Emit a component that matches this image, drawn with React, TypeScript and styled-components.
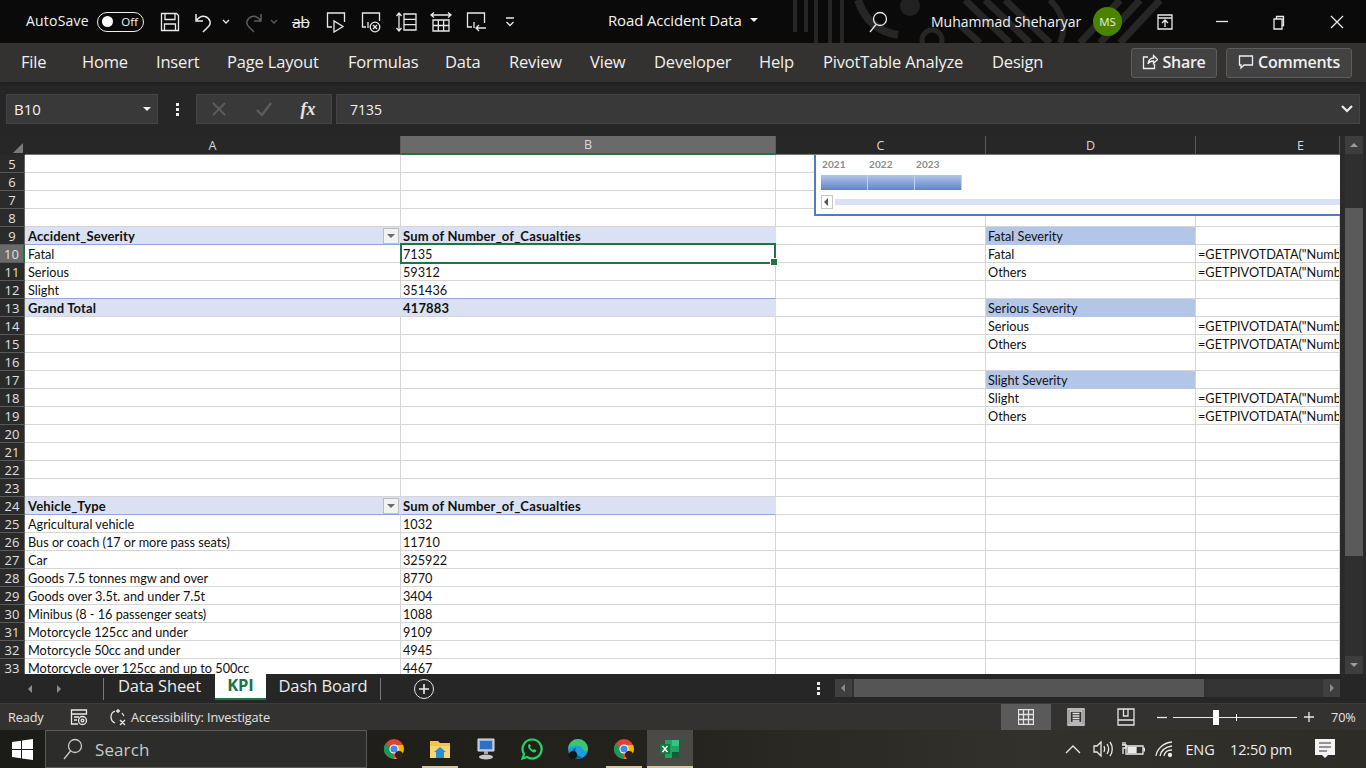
import React from "react";
import styled, { createGlobalStyle } from "styled-components";

const Global = createGlobalStyle`
  html, body { margin: 0; padding: 0; background: #262626; overflow: hidden; }
  * { box-sizing: border-box; }
  #root { width: 1366px; height: 768px; }
`;
const UI = `"Open Sans", "Noto Sans", sans-serif`;
const Page = styled.div`
  width: 1366px; height: 768px; display: flex; flex-direction: column;
  font-family: ${UI}; color: #f2f2f2; overflow: hidden;
`;
const TitleBar = styled.header`
  position: relative; height: 43px; flex: none; background: #0a0a0a; display: flex; align-items: center; padding-left: 26px;
`;
const Decoration = styled.svg`
  position: absolute; left: 780px; top: 0; width: 400px; height: 43px; opacity: .9;
`;
const AutoSave = styled.span`font-size: 14px; letter-spacing: .2px; width: 71px; flex: none; position: relative; padding-bottom: 2px;`;
const Toggle = styled.div`
  width: 47px; height: 20px; border: 1px solid #eee; border-radius: 10px; flex: none; display: flex; align-items: center;
  padding: 0 5px 0 4px; justify-content: space-between; font-size: 11.5px; margin-right: 8px; position: relative;
`;
const Knob = styled.i`width: 11px; height: 11px; border-radius: 50%; background: #fff; display: block;`;
const Slot = styled.div<{ $w: number; $dim?: boolean; $ml?: number; $pl?: number }>`
  width: ${p => p.$w}px; flex: none; display: flex; align-items: center; justify-content: center; position: relative;
  margin-left: ${p => p.$ml || 0}px; padding-left: ${p => p.$pl || 0}px;
  color: ${p => (p.$dim ? "#5c5c5c" : "#e9e9e9")};
`;
const StrikeAb = styled.span`font-size: 16px; line-height: 20px; letter-spacing: -.5px; text-decoration: line-through; color: #e9e9e9;`;
const DocTitle = styled.div`
  position: relative; margin-left: 81px; width: 246px; flex: none; font-size: 15px; letter-spacing: -.15px; display: flex; align-items: center; gap: 8px; white-space: nowrap; padding-bottom: 3px;
`;
const Caret = styled.i`
  width: 0; height: 0; border-left: 4px solid transparent; border-right: 4px solid transparent; border-top: 4px solid currentColor; display: block; flex: none;
`;
const UserName = styled.span`position: relative; margin-left: 29px; width: 162px; flex: none; font-size: 14px; letter-spacing: 0; white-space: nowrap; padding-bottom: 1px;`;
const Avatar = styled.div`
  position: relative; width: 29px; height: 29px; border-radius: 50%; background: #4b8300; color: #e8f0dd; font-size: 11.5px; display: flex; align-items: center; justify-content: center; flex: none;
`;
const MenuBar = styled.nav`
  height: 39px; flex: none; background: #333231; display: flex; align-items: center; padding-left: 21px; box-shadow: 0 2px 3px rgba(0,0,0,.25); position: relative;
`;
const MenuItem = styled.span<{ $w: number }>`
  width: ${p => p.$w}px; flex: none; font-size: 16.5px; white-space: nowrap; letter-spacing: -.18px; color: #f0f0f0; padding-bottom: 2px;
`;
const RibbonButton = styled.div<{ $w: number; $ml: number }>`
  width: ${p => p.$w}px; margin-left: ${p => p.$ml}px; height: 30px; flex: none; background: #424242; border: 1px solid #5d5d5d; border-radius: 3px;
  display: flex; align-items: center; justify-content: center; gap: 4px; font-size: 16px; font-weight: 600; letter-spacing: -.25px; color: #efefef; padding-bottom: 1px;
`;
const FormulaRow = styled.div`
  height: 54px; flex: none; background: #262626; display: flex; align-items: center; padding: 0 6px;
`;
const NameBox = styled.div`
  width: 152px; height: 30px; background: #393939; border: 1px solid #444; display: flex; align-items: center; justify-content: space-between; padding: 0 6px 0 7px; font-size: 15px; flex: none;
`;
const DotsV = styled.div`width: 38px; flex: none; display: flex; flex-direction: column; align-items: center; gap: 2px;`;
const Dot = styled.i`width: 3px; height: 3px; background: #eee; display: block;`;
const FxBox = styled.div`
  width: 136px; height: 30px; background: #393939; border: 1px solid #444; display: flex; align-items: center; flex: none; padding-left: 0;
`;
const FxText = styled.span`font-family: "Liberation Serif", serif; font-style: italic; font-weight: 700; font-size: 18px; color: #e4e4e4;`;
const FormulaInput = styled.div`
  flex: none; width: 1024px; margin-left: 4px; height: 30px; background: #393939; border: 1px solid #444; display: flex; align-items: center; justify-content: space-between; padding: 0 6px 0 13px; font-size: 14px;
`;
const SheetArea = styled.div`height: 538px; flex: none; display: flex; background: #262626;`;
const SheetMain = styled.div`width: 1340px; flex: none; display: flex; flex-direction: column;`;
const ColHeaders = styled.div`display: flex; height: 19px; flex: none; background: #272727;`;
const Corner = styled.div`
  width: 25px; flex: none; position: relative; &::after { content: ""; position: absolute; right: 2px; bottom: 2px; border-style: solid; border-width: 0 0 10px 10px; border-color: transparent transparent #7a7a7a transparent; }
`;
const ColHead = styled.div<{ $w: number; $on?: boolean; $pl?: number }>`
  width: ${p => p.$w}px; flex: none; display: flex; align-items: center; justify-content: center; font-size: 12.5px; color: #d9d9d9;
  padding-left: ${p => p.$pl || 0}px;
  background: ${p => (p.$on ? "#6a6a6a" : "transparent")}; border-right: 1px solid #5a5a5a;
  border-bottom: ${p => (p.$on ? "2px solid #217346" : "1px solid #777")};
`;
const GridWrap = styled.div`position: relative; height: 519px; overflow: hidden; background: #fff;`;
const Row = styled.div`display: flex; height: 18px;`;
const RowHead = styled.div<{ $on?: boolean }>`
  width: 25px; flex: none; display: flex; align-items: center; justify-content: center; font-size: 13px; color: #e0e0e0;
  background: ${p => (p.$on ? "#6a6a6a" : "#2a2a2a")}; border-bottom: 1px solid #5a5a5a; border-right: ${p => (p.$on ? "2px solid #217346" : "1px solid #666")};
`;
const Cell = styled.div<{ $w: number; $fill?: string; $bold?: boolean; $line?: string; $nr?: boolean; $pad?: number }>`
  width: ${p => p.$w}px; flex: none; position: relative; height: 18px; padding: 1px 0 0 ${p => p.$pad ?? 2}px; white-space: nowrap;
  font-family: Lato, "Liberation Sans", sans-serif; font-size: ${p => (p.$bold ? 13 : 12.7)}px; letter-spacing: ${p => (p.$bold ? ".16px" : "0")}; line-height: 17px; color: #111; overflow: visible;
  font-weight: ${p => (p.$bold ? 700 : 400)};
  background: ${p => p.$fill || "#fff"};
  border-right: 1px solid ${p => (p.$nr ? p.$fill || "#d6d6d6" : "#d6d6d6")};
  border-bottom: 1px solid ${p => p.$line || "#d6d6d6"};
`;
const Clip = styled.div`overflow: hidden; white-space: nowrap;`;
const FilterBtn = styled.div`
  position: absolute; right: 1px; top: 1px; width: 16px; height: 16px; background: #f2f2f2; border: 1px solid #bdbdbd; display: flex; align-items: center; justify-content: center; color: #6b6b6b;
`;
const Selection = styled.div`
  position: absolute; left: -1px; top: -2px; right: -1px; bottom: -2px; border: 2px solid #217346; z-index: 2;
  &::after { content: ""; position: absolute; right: -4px; bottom: -4px; width: 6px; height: 6px; background: #217346; border: 1px solid #fff; }
`;
const Slicer = styled.div`
  position: absolute; left: 814px; top: 0; width: 526px; height: 61px; background: #fff; border: 2px solid #4f7cc4; border-top: none; border-right: none; padding: 0 0 0 5px; z-index: 3; display: flex; flex-direction: column;
`;
const Years = styled.div`display: flex; height: 20px; align-items: center; padding-bottom: 2px;`;
const Year = styled.span`width: 47px; flex: none; font-family: Lato, sans-serif; font-size: 10px; font-weight: 700; color: #8a8a8a; padding-left: 1px; letter-spacing: .1px;`;
const Bars = styled.div`display: flex; height: 15px;`;
const Bar = styled.div`width: 47px; flex: none; background: linear-gradient(#b4c6e7, #5f84c9); border-right: 1px solid #c6d3ec;`;
const SlicerScroll = styled.div`display: flex; align-items: center; margin-top: 5px; gap: 2px;`;
const SlicerBtn = styled.div`width: 12px; height: 14px; background: #fff; border: 1px solid #c8c8c8; display: flex; align-items: center; justify-content: center; color: #555;`;
const SlicerTrack = styled.div`flex: 1; height: 6px; background: #d9e1f2;`;
const VScroll = styled.div`width: 26px; flex: none; background: #2a2a2a; display: flex; flex-direction: column; align-items: center; padding-left: 1px;`;
const ScrollBtn = styled.div`width: 18px; height: 18px; background: #3d3d3d; display: flex; align-items: center; justify-content: center; color: #9c9c9c; flex: none;`;
const VTrack = styled.div`flex: 1; width: 18px; background: #2f2f2f; padding-top: 54px;`;
const VThumb = styled.div`width: 18px; height: 348px; background: #5a5a5a;`;
const TabBar = styled.div`height: 29px; flex: none; background: #262626; display: flex; align-items: stretch;`;
const TabNav = styled.div`width: 103px; flex: none; display: flex; align-items: center; padding-left: 26px; gap: 18px; color: #8d8d8d;`;
const TabSep = styled.i`width: 1px; height: 22px; background: #7a7a7a; display: block; align-self: center; flex: none;`;
const SheetTab = styled.div<{ $w: number; $on?: boolean }>`
  width: ${p => p.$w}px; flex: none; height: ${p => (p.$on ? "26px" : "22px")}; display: flex; align-items: center; justify-content: center; font-size: 16.5px; letter-spacing: -.1px;
  background: ${p => (p.$on ? "#fff" : "transparent")}; color: ${p => (p.$on ? "#217346" : "#ececec")}; font-weight: ${p => (p.$on ? 700 : 400)};
  border-bottom: ${p => (p.$on ? "2px solid #217346" : "none")}; padding-bottom: ${p => (p.$on ? 3 : 0)}px;
`;
const AddTab = styled.div`margin-left: 33px; width: 20px; height: 20px; margin-top: 5px; border: 1.5px solid #e5e5e5; border-radius: 50%; flex: none; position: relative; display: flex; align-items: center; justify-content: center;`;
const TabDots = styled.div`margin-left: 381px; width: 7px; flex: none; display: flex; flex-direction: column; align-items: center; justify-content: center; gap: 2px; `;
const HScroll = styled.div`
  margin-left: 13px; margin-top: 5px; width: 505px; height: 18px; background: #333; flex: none; display: flex; align-items: stretch; gap: 2px;
`;
const HBtn = styled.div`width: 17px; flex: none; background: #3f3f3f; display: flex; align-items: center; justify-content: center; color: #8a8a8a;`;
const HThumb = styled.div`width: 350px; flex: none; background: #555;`;
const HRest = styled.div`flex: 1;`;
const StatusBar = styled.div`height: 27px; flex: none; background: #333231; border-top: 1px solid #3c3c3c; display: flex; align-items: center; padding-left: 8px; font-size: 12.7px; color: #e4e4e4;`;
const StatusText = styled.span<{ $w: number; $ml?: number }>`width: ${p => p.$w}px; margin-left: ${p => p.$ml || 0}px; flex: none; white-space: nowrap; letter-spacing: -.1px;`;
const ViewBtn = styled.div<{ $w: number; $on?: boolean }>`
  width: ${p => p.$w}px; height: 26px; flex: none; display: flex; align-items: center; justify-content: center; background: ${p => (p.$on ? "#5a5a5a" : "transparent")}; color: #e4e4e4;
`;
const ZoomTrack = styled.div`position: relative; width: 124px; height: 1px; background: #e8e8e8; flex: none;`;
const ZoomThumb = styled.i`position: absolute; left: 40px; top: -7px; width: 6px; height: 15px; background: #fff;`;
const ZoomTick = styled.i`position: absolute; left: 63px; top: -3px; width: 1px; height: 7px; background: #fff;`;
const Taskbar = styled.footer`
  height: 38px; flex: none; display: flex; align-items: center; background: linear-gradient(90deg, #1b1b17 0%, #22211c 45%, #33312b 75%, #2e2c27 100%); color: #eaeaea;
`;
const WinSlot = styled.div`width: 45px; flex: none; display: flex; justify-content: center;`;
const SearchBox = styled.div`
  width: 322px; height: 38px; flex: none; background: #2c2c2a; border: 1px solid #5a5a58; display: flex; align-items: center; padding-left: 15px; gap: 12px; font-size: 17px; color: #c9c9c9; letter-spacing: .1px;
`;
const TaskIcon = styled.div<{ $u?: boolean; $act?: boolean }>`
  width: 46px; height: 38px; flex: none; display: flex; align-items: center; justify-content: center; position: relative;
  background: ${p => (p.$act ? "#4a4a47" : "transparent")};
  &::after { content: ""; display: ${p => (p.$u ? "block" : "none")}; position: absolute; left: ${p => (p.$act ? 0 : 5)}px; right: ${p => (p.$act ? 0 : 5)}px; bottom: 0; height: 2px; background: #d6c79a; }
`;
const Tray = styled.div`margin-left: 365px; display: flex; align-items: center; flex: none; font-size: 14.5px; color: #ececec;`;
const TrayText = styled.span<{ $w: number }>`width: ${p => p.$w}px; flex: none; text-align: center; white-space: nowrap; letter-spacing: -.15px;`;

const S = { fill: "none", stroke: "currentColor", strokeWidth: 1.3 } as const;
const I = ({ w = 20, h = 20, children }: { w?: number; h?: number; children: React.ReactNode }) => (
  <svg width={w} height={h} viewBox={`0 0 ${w} ${h}`} {...S}>{children}</svg>
);
const Tri = ({ d }: { d: "l" | "r" | "u" | "d" }) => {
  const p = { l: "6,1 2,5 6,9", r: "3,1 7,5 3,9", u: "1,7 5,3 9,7", d: "1,3 5,7 9,3" }[d];
  return <svg width={10} height={10} viewBox="0 0 10 10"><polygon points={p} fill="currentColor" /></svg>;
};
const Chev = () => <svg width={8} height={6} viewBox="0 0 8 6" {...S}><path d="M1 1l3 3 3-3" /></svg>;

const cols = { a: 376, b: 375, c: 210, d: 210, e: 144 };
const GP = `=GETPIVOTDATA("Number_of_Casualties",$A$9)`;
type R = { a?: string; b?: string; d?: string; e?: boolean; head?: boolean; total?: boolean; dh?: boolean; before?: boolean };
const data: Record<number, R> = {
  9: { a: "Accident_Severity", b: "Sum of Number_of_Casualties", head: true, d: "Fatal Severity", dh: true },
  10: { a: "Fatal", b: "7135", d: "Fatal", e: true },
  11: { a: "Serious", b: "59312", d: "Others", e: true },
  12: { a: "Slight", b: "351436", before: true },
  13: { a: "Grand Total", b: "417883", total: true, d: "Serious Severity", dh: true },
  14: { d: "Serious", e: true },
  15: { d: "Others", e: true },
  17: { d: "Slight Severity", dh: true },
  18: { d: "Slight", e: true },
  19: { d: "Others", e: true },
  24: { a: "Vehicle_Type", b: "Sum of Number_of_Casualties", head: true },
  25: { a: "Agricultural vehicle", b: "1032" },
  26: { a: "Bus or coach (17 or more pass seats)", b: "11710" },
  27: { a: "Car", b: "325922" },
  28: { a: "Goods 7.5 tonnes mgw and over", b: "8770" },
  29: { a: "Goods over 3.5t. and under 7.5t", b: "3404" },
  30: { a: "Minibus (8 - 16 passenger seats)", b: "1088" },
  31: { a: "Motorcycle 125cc and under", b: "9109" },
  32: { a: "Motorcycle 50cc and under", b: "4945" },
  33: { a: "Motorcycle over 125cc and up to 500cc", b: "4467" },
};
const rowNums = Array.from({ length: 29 }, (_, i) => i + 5);
const menu: [string, number][] = [["File", 61], ["Home", 74], ["Insert", 71], ["Page Layout", 121], ["Formulas", 97], ["Data", 64], ["Review", 81], ["View", 64], ["Developer", 105], ["Help", 64], ["PivotTable Analyze", 169], ["Design", 91]];

const Chrome = () => (
  <svg width={22} height={22} viewBox="0 0 22 22">
    <circle cx="11" cy="11" r="10" fill="#db4437" />
    <path d="M11 11L2.3 16A10 10 0 0 1 3 5L8 13z" fill="#0f9d58" />
    <path d="M11 7h9A10 10 0 0 1 11 21l4-8z" fill="#f4b400" />
    <path d="M3 16l5-4 3 9a10 10 0 0 1-8-5z" fill="#0f9d58" />
    <circle cx="11" cy="11" r="4.6" fill="#fff" /><circle cx="11" cy="11" r="3.6" fill="#4285f4" />
    <circle cx="16" cy="17" r="4" fill="#2a2522" />
  </svg>
);

export default function App() {
  return (
    <Page>
      <Global />
      <TitleBar>
        <Decoration viewBox="0 0 400 43" fill="none" stroke="#2a2a2a" strokeWidth="4">
          <path d="M15 0v32M26 0v32M36 0v43M50 0v43M62 0v43" />
          <path d="M78 0q10 30 40 35" strokeWidth="8" />
          <circle cx="130" cy="6" r="10" fill="#242424" stroke="none" />
          <circle cx="152" cy="40" r="10" strokeWidth="5" />
          <path d="M185 0l45 43M205 0l45 43M225 0l45 43M180 25l20 18" strokeWidth="7" />
          <path d="M270 0q20 20 10 43" strokeWidth="6" />
          <path d="M300 43l40-43M320 43l40-43M340 43l40-43" strokeWidth="7" />
        </Decoration>
        <AutoSave>AutoSave</AutoSave>
        <Toggle><Knob /><span>Off</span></Toggle>
        <Slot $w={35}><I w={20} h={20}><path d="M1.5 1.5h15l2 2v15h-17zM5 1.5v6h10v-6M4.5 18.5v-6.500h11v6.500" /></I></Slot>
        <Slot $w={33}><I w={20} h={22}><path d="M2 3v7h7M2.5 9.5C5 6 8 4.5 11 5.5c5 1.5 7 7 3 10.5l-5 5" strokeWidth="1.5" /></I></Slot>
        <Slot $w={11}><Chev /></Slot>
        <Slot $w={30} $ml={6.5} $dim><I w={20} h={22}><path d="M18 3v7h-7M17.5 9.5C15 6 12 4.5 9 5.5c-5 1.5-7 7-3 10.5l5 5" strokeWidth="1.5" /></I></Slot>
        <Slot $w={12} $dim><Chev /></Slot>
        <Slot $w={38.5} $pl={4}><StrikeAb>ab</StrikeAb></Slot>
        <Slot $w={35}><I w={20} h={22}><path d="M6 16H1.5V2h17v9M8 10v11l9-5.5z" /></I></Slot>
        <Slot $w={35}><I w={20} h={22}><path d="M5 16H1.5V2h17v8" /><path d="M7 11v6" /><circle cx="14" cy="16" r="4.8" /><path d="M12 14l4 4m0-4l-4 4" /></I></Slot>
        <Slot $w={35}><I w={22} h={22}><path d="M9 3h12v16H9zM9 8.3h12M9 13.6h12M4 2v18M1.5 5L4 2l2.5 3M1.5 17L4 20l2.5-3" /></I></Slot>
        <Slot $w={35}><I w={22} h={22}><path d="M3 9h16v11H3zM3 14.5h16M8.3 9v11M13.6 9v11M1 4h20M4 1.5L1 4l3 2.5M18 1.5L21 4l-3 2.5" /></I></Slot>
        <Slot $w={35}><I w={20} h={22}><path d="M6 16H1.5V2h17v10M20 17h-10M13 14l-3 3 3 3M8 11v6" /></I></Slot>
        <Slot $w={34}><I w={12} h={12}><path d="M2 2h8M2.5 6L6 9.5 9.5 6" /></I></Slot>
        <DocTitle>Road Accident Data<Caret /></DocTitle>
        <Slot $w={48}><I w={22} h={24}><circle cx="13" cy="9" r="6.5" /><path d="M9 14.5L3 22" /></I></Slot>
        <UserName>Muhammad Sheharyar</UserName>
        <Avatar>MS</Avatar>
        <Slot $w={86}><I w={16} h={16}><path d="M1 1h14v14H1zM1 4h14M8 13V6M5 9l3-3 3 3" /></I></Slot>
        <Slot $w={28}><I w={12} h={3}><path d="M0 1.5h12" /></I></Slot>
        <Slot $w={86}><I w={14} h={16}><path d="M2 5h8v10H2zM4.5 5V2.5h7v9H10" /></I></Slot>
        <Slot $w={30}><I w={14} h={14}><path d="M1 1l12 12M13 1L1 13" /></I></Slot>
      </TitleBar>
      <MenuBar>
        {menu.map(([t, w]) => <MenuItem key={t} $w={w}>{t}</MenuItem>)}
        <RibbonButton $w={86} $ml={48}><I w={16} h={16}><path d="M6 3H1.5v11.5h11V10M6 10c0-4 3-6 5.5-6V1.5l4 4-4 4V7C9 7 7 8 6 10z" /></I>Share</RibbonButton>
        <RibbonButton $w={126} $ml={9}><I w={16} h={16}><path d="M1.5 2h13v9H6l-3 3v-3H1.5z" /></I>Comments</RibbonButton>
      </MenuBar>
      <FormulaRow>
        <NameBox>B10<Caret /></NameBox>
        <DotsV><Dot /><Dot /><Dot /></DotsV>
        <FxBox>
          <Slot $w={44} $dim><I w={16} h={16}><path d="M2 2l12 12M14 2L2 14" strokeWidth="2" /></I></Slot>
          <Slot $w={46} $dim><I w={18} h={16}><path d="M2 9l5 5L16 2" strokeWidth="2.4" /></I></Slot>
          <Slot $w={42}><FxText>fx</FxText></Slot>
        </FxBox>
        <FormulaInput>7135<svg width={12} height={8} viewBox="0 0 12 8"><path d="M1 1l5 5 5-5" fill="none" stroke="#eee" strokeWidth="2.2" /></svg></FormulaInput>
      </FormulaRow>
      <SheetArea>
        <SheetMain>
          <ColHeaders>
            <Corner />
            <ColHead $w={cols.a}>A</ColHead>
            <ColHead $w={cols.b} $on>B</ColHead>
            <ColHead $w={cols.c}>C</ColHead>
            <ColHead $w={cols.d}>D</ColHead>
            <ColHead $w={cols.e} $pl={66}>E</ColHead>
          </ColHeaders>
          <GridWrap>
            {rowNums.map(n => {
              const r = data[n] || {};
              const pv = r.head || r.total;
              const fill = pv ? "#d9e1f2" : undefined;
              const line = r.head || r.before ? "#8ea9db" : undefined;
              return (
                <Row key={n}>
                  <RowHead $on={n === 10}>{n}</RowHead>
                  <Cell $w={cols.a} $pad={3} $fill={fill} $line={line} $bold={pv} $nr={pv}>
                    {r.a}
                    {r.head && <FilterBtn><Tri d="d" /></FilterBtn>}
                  </Cell>
                  <Cell $w={cols.b} $fill={fill} $line={line} $bold={pv} $nr={pv}>
                    {r.b}
                    {n === 10 && <Selection />}
                  </Cell>
                  <Cell $w={cols.c} />
                  <Cell $w={cols.d} $fill={r.dh ? "#b4c6e7" : undefined} $line={r.dh ? "#b4c6e7" : undefined}>{r.d}</Cell>
                  <Cell $w={cols.e}><Clip>{r.e ? GP : ""}</Clip></Cell>
                </Row>
              );
            })}
            <Slicer>
              <Years><Year>2021</Year><Year>2022</Year><Year>2023</Year></Years>
              <Bars><Bar /><Bar /><Bar /></Bars>
              <SlicerScroll><SlicerBtn><Tri d="l" /></SlicerBtn><SlicerTrack /></SlicerScroll>
            </Slicer>
          </GridWrap>
        </SheetMain>
        <VScroll>
          <ScrollBtn><Tri d="u" /></ScrollBtn>
          <VTrack><VThumb /></VTrack>
          <ScrollBtn><Tri d="d" /></ScrollBtn>
        </VScroll>
      </SheetArea>
      <TabBar>
        <TabNav><Tri d="l" /><Tri d="r" /></TabNav>
        <TabSep />
        <SheetTab $w={111}>Data Sheet</SheetTab>
        <SheetTab $w={51} $on>KPI</SheetTab>
        <SheetTab $w={114}>Dash Board</SheetTab>
        <TabSep />
        <AddTab><svg width={12} height={12} viewBox="0 0 12 12"><path d="M6 1v10M1 6h10" stroke="#eee" strokeWidth="1.6" /></svg></AddTab>
        <TabDots><Dot /><Dot /><Dot /></TabDots>
        <HScroll>
          <HBtn><Tri d="l" /></HBtn>
          <HThumb />
          <HRest />
          <HBtn><Tri d="r" /></HBtn>
        </HScroll>
      </TabBar>
      <StatusBar>
        <StatusText $w={61}>Ready</StatusText>
        <Slot $w={20}><I w={18} h={18}><path d="M1.5 2h15v4H1.5zM1.5 6v10H8M4 9h5M4 12h3" /><circle cx="12.5" cy="12.5" r="4" /><circle cx="12.5" cy="12.5" r="1.4" /></I></Slot>
        <Slot $w={26} $ml={16}><I w={18} h={18}><path d="M6 3a6.5 6.5 0 0 0 0 12M9 1v4M7 3h4M11 12l5 5m0-5l-5 5M13 5l2 3" /></I></Slot>
        <StatusText $w={870}>Accessibility: Investigate</StatusText>
        <ViewBtn $w={50} $on><I w={16} h={16}><path d="M.5.5h15v15H.5zM5.5.5v15M10.5.5v15M.5 5.5h15M.5 10.5h15" /></I></ViewBtn>
        <ViewBtn $w={50}><I w={18} h={18}><path d="M1 1h16v16H1zM3 3h12v12H3zM5.5 5.5h7M5.5 8h7M5.5 10.5h7M5.5 13h7" /></I></ViewBtn>
        <ViewBtn $w={50}><I w={18} h={18}><path d="M1 1h16v16H1zM6.5 1v7h4.5V1M1 12h16" /></I></ViewBtn>
        <Slot $w={22}><I w={10} h={3}><path d="M0 1.5h10" /></I></Slot>
        <ZoomTrack><ZoomThumb /><ZoomTick /></ZoomTrack>
        <Slot $w={24}><I w={10} h={10}><path d="M0 5h10M5 0v10" /></I></Slot>
        <StatusText $w={30} $ml={10}>70%</StatusText>
      </StatusBar>
      <Taskbar>
        <WinSlot><svg width={21} height={21} viewBox="0 0 21 21"><path d="M0 3l9-1.3V10H0zM10 1.5L21 0v10H10zM0 11h9v8.3L0 18zM10 11h11v10L10 19.5z" fill="#fff" /></svg></WinSlot>
        <SearchBox><I w={22} h={24}><circle cx="14" cy="9" r="6.5" /><path d="M9.5 14L3 22" /></I>Search</SearchBox>
        <Slot $w={4} />
        <TaskIcon><Chrome /></TaskIcon>
        <TaskIcon $u><svg width={20} height={18} viewBox="0 0 20 18"><path d="M0 1h8l2 2h10v15H0z" fill="#f4c542" /><path d="M0 6h20v12H0z" fill="#f7d774" /><path d="M6 18v-6h8v6z" fill="#2e8bd8" /><path d="M4 12l6-5 6 5z" fill="#2e8bd8" /></svg></TaskIcon>
        <TaskIcon><svg width={22} height={24} viewBox="0 0 22 24"><path d="M3 2h16v12H3z" fill="#9fb3cf" stroke="#e5e5e5" /><path d="M5 4h12v8H5z" fill="#2a6fc9" /><path d="M9 14h4v3H9z" fill="#aaa" /><ellipse cx="11" cy="20" rx="7" ry="2.5" fill="#c8c8c8" /></svg></TaskIcon>
        <TaskIcon><svg width={22} height={22} viewBox="0 0 22 22"><path d="M11 1.5A9.5 9.5 0 0 0 3 16l-1.5 4.5L6 19a9.5 9.5 0 1 0 5-17.5z" fill="none" stroke="#25d366" strokeWidth="2.2" /><path d="M7.5 6.5c-1 1.5-.5 3.5 1.5 5.5s4 3 5.5 2l1-1.500-2.500-1.500-1 1c-1-.3-2.500-1.800-3-3l1-1L8.700 6z" fill="#25d366" /></svg></TaskIcon>
        <TaskIcon><svg width={22} height={22} viewBox="0 0 22 22"><circle cx="11" cy="11" r="10" fill="#1b9de2" /><path d="M1 11a10 10 0 0 1 20 0c0 2-2 3-4 2-1-3-3-5-6-5-5 0-9 1-10 3z" fill="#3bc56f" /><path d="M7 20c-4-3-3-9 2-10-2 3 0 8 6 9-3 2-6 2-8 1z" fill="#0c59a4" /><circle cx="6" cy="17" r="4" fill="#151515" /></svg></TaskIcon>
        <TaskIcon $u><Chrome /></TaskIcon>
        <TaskIcon $u $act><svg width={20} height={20} viewBox="0 0 20 20"><path d="M5 1h14v18H5z" fill="#21a366" /><path d="M12 1h7v6h-7z" fill="#33c481" /><path d="M12 13h7v6h-7z" fill="#185c37" /><path d="M0 5h10v10H0z" fill="#107c41" /><path d="M2.5 7l5 6m0-6l-5 6" stroke="#fff" strokeWidth="1.5" /></svg></TaskIcon>
        <Tray>
          <Slot $w={30}><I w={16} h={10}><path d="M1 9l7-7 7 7" /></I></Slot>
          <Slot $w={30}><I w={22} h={20}><path d="M2 7h3l4-4v14l-4-4H2zM12 7c1 2 1 4 0 6M15 5c2 3 2 7 0 10M18 3c3 4 3 10 0 14" /></I></Slot>
          <Slot $w={30}><I w={24} h={16}><path d="M5 5h17v8H5zM22 7.5h1.5v3" /><path d="M7 6.5h8v5H7z" fill="currentColor" /><path d="M2 1v3M4 1v3M1 4h4v3H2v6" /></I></Slot>
          <Slot $w={34}><I w={20} h={18}><path d="M1 16C2 9 8 3 17 2M5 16c1-5 5-9 12-10M9 16c.5-3 3-6 8-6" /><circle cx="15" cy="15" r="1.5" fill="currentColor" /></I></Slot>
          <TrayText $w={36}>ENG</TrayText>
          <TrayText $w={86}>12:50 pm</TrayText>
          <Slot $w={30} $ml={6}><svg width={20} height={20} viewBox="0 0 20 20"><path d="M0 0h20v16h-7l-3 3-3-3H0z" fill="#f3f3f3" /><path d="M4 4h12M4 8h12M4 12h8" stroke="#333" /></svg></Slot>
        </Tray>
      </Taskbar>
    </Page>
  );
}
